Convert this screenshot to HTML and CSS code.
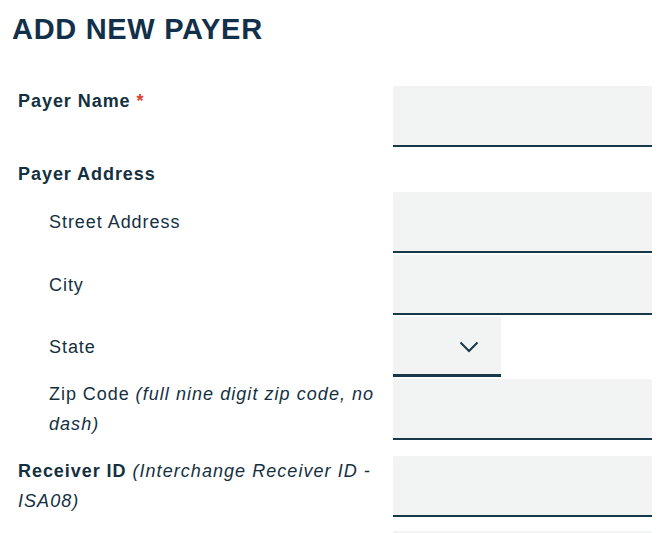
FILE: index.html
```html
<!DOCTYPE html>
<html lang="en">
<head>
<meta charset="utf-8">
<title>Add New Payer</title>
<link rel="stylesheet" href="styles.css">
</head>
<body>
<main class="page">
  <h1 class="title">ADD NEW PAYER</h1>
  <form class="form">
    <div class="row row-top">
      <label class="label strong">Payer Name <span class="req">*</span></label>
      <div class="field"><input class="input" type="text"></div>
    </div>
    <div class="group-head">
      <span class="label strong">Payer Address</span>
    </div>
    <div class="row row-sub">
      <label class="label sub">Street Address</label>
      <div class="field"><input class="input" type="text"></div>
    </div>
    <div class="row row-sub">
      <label class="label sub">City</label>
      <div class="field"><input class="input" type="text"></div>
    </div>
    <div class="row row-sub">
      <label class="label sub">State</label>
      <div class="field">
        <div class="select">
          <svg class="chev" width="20" height="12" viewBox="0 0 20 12" aria-hidden="true"><path d="M1.5 1.5 L10 10 L18.5 1.5" fill="none" stroke="#17384a" stroke-width="2"/></svg>
        </div>
      </div>
    </div>
    <div class="row row-top">
      <label class="label sub">Zip Code <em class="hint">(full nine digit zip code, no dash)</em></label>
      <div class="field"><input class="input" type="text"></div>
    </div>
    <div class="row row-top row-gap">
      <label class="label strong">Receiver ID <em class="hint">(Interchange Receiver ID - ISA08)</em></label>
      <div class="field"><input class="input" type="text"></div>
    </div>
    <div class="row row-top row-gap-last">
      <label class="label strong">&nbsp;</label>
      <div class="field"><input class="input" type="text"></div>
    </div>
  </form>
</main>
</body>
</html>
```
FILE: styles.css
```css
* { box-sizing: border-box; }
html, body { margin: 0; padding: 0; background: #ffffff; }
body {
  font-family: "Liberation Sans", Arial, sans-serif;
  color: #14303f;
}
.page {
  padding: 0 20px 0 12px;
}
.title {
  margin: 11px 0 0 0;
  font-size: 29px;
  line-height: 36px;
  font-weight: 700;
  color: #13304a;
  letter-spacing: 0.7px;
}
.form {
  margin-top: 39px;
  padding-left: 6px;
}
.row {
  display: flex;
  margin-bottom: 2px;
}
.row-top { align-items: flex-start; }
.row-sub { align-items: center; }
.row-gap { margin-top: 16px; }
.row-gap-last { margin-top: 14px; }
.label {
  flex: 0 0 360px;
  margin-right: 15px;
  font-size: 18px;
  line-height: 30px;
  letter-spacing: 0.95px;
}
.strong { font-weight: 700; }
.sub { padding-left: 31px; }
.req { color: #e0412d; }
.hint { font-style: italic; font-weight: 400; letter-spacing: 1.05px; }
.field { flex: 1 1 auto; }
.input {
  display: block;
  width: 100%;
  height: 60.8px;
  border: 0;
  border-bottom: 2px solid #17384a;
  border-radius: 2px 2px 0 0;
  background: #f2f3f3;
  margin: 0;
  padding: 0 12px;
  font: inherit;
}
.group-head {
  padding-top: 10px;
  height: 43px;
}
.group-head .label { display: block; }
.select {
  width: 108px;
  height: 60px;
  background: #f2f3f3;
  border-bottom: 3px solid #17384a;
  display: flex;
  align-items: center;
  justify-content: flex-end;
  padding-right: 22px;
  padding-top: 3px;
}
.chev { display: block; }
```
